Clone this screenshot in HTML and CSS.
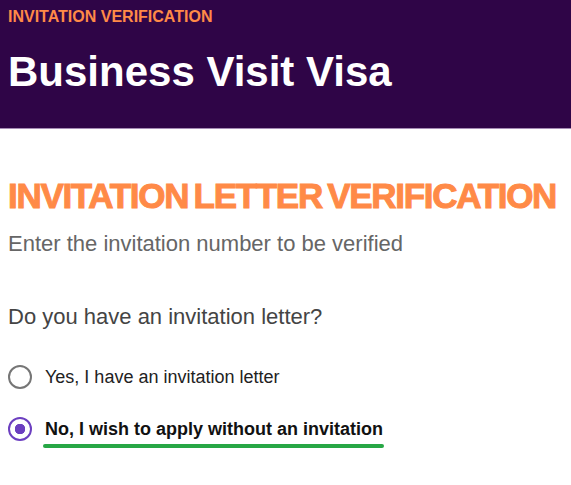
FILE: index.html
```html
<!DOCTYPE html>
<html lang="en">
<head>
    <meta charset="UTF-8">
    <meta name="viewport" content="width=device-width, initial-scale=1.0">
    <title>Business Visit Visa</title>
    <link rel="stylesheet" href="styles.css">
</head>
<body>
    <header class="banner">
        <p class="eyebrow">INVITATION VERIFICATION</p>
        <h1>Business Visit Visa</h1>
    </header>
    <main class="content">
        <h2>INVITATION LETTER VERIFICATION</h2>
        <p class="hint">Enter the invitation number to be verified</p>
        <p class="question">Do you have an invitation letter?</p>
        <div class="options">
            <label class="option">
                <input type="radio" name="invite" value="yes">
                <span class="option-text">Yes, I have an invitation letter</span>
            </label>
            <label class="option selected">
                <input type="radio" name="invite" value="no" checked>
                <span class="option-text">No, I wish to apply without an invitation</span>
            </label>
        </div>
    </main>
</body>
</html>
```

FILE: styles.css
```css
body {
    margin: 0;
    min-height: 100vh;
    font-family: "Liberation Sans", Arial, sans-serif;
    background: #fff;
}

.banner {
    background: #2f0547;
    padding: 8px 8px 0;
    height: 120px;
    border-bottom: 1px solid #a58cb5;
}

.eyebrow {
    margin: 0;
    color: #ff8a47;
    font-size: 16px;
    font-weight: bold;
}

.banner h1 {
    margin: 22px 0 0;
    color: #fff;
    font-size: 42px;
    font-weight: bold;
}

.content {
    padding: 0 8px 40px;
}

.content h2 {
    margin: 47px 0 0;
    color: #ff8a47;
    font-size: 35px;
    font-weight: 900;
    letter-spacing: -1.3px;
    word-spacing: -3px;
    -webkit-text-stroke: 1px #ff8a47;
}

.hint {
    margin: 15px 0 0;
    color: #666;
    font-size: 22px;
}

.question {
    margin: 47px 0 0;
    color: #444;
    font-size: 22px;
}

.options {
    margin-top: 35px;
    display: flex;
    flex-direction: column;
    gap: 28px;
}

.option {
    display: flex;
    align-items: center;
    gap: 13px;
    font-size: 18px;
    color: #222;
}

.option input {
    appearance: none;
    margin: 0;
    width: 24px;
    height: 24px;
    border: 2.5px solid #767676;
    border-radius: 50%;
    box-sizing: border-box;
    flex-shrink: 0;
}

.option input:checked {
    border-color: #6c3fc0;
    background: radial-gradient(circle, #6c3fc0 0 5px, #fff 5.5px);
}

.option-text {
    position: relative;
}

.option.selected .option-text {
    font-weight: bold;
    color: #111;
}

.option.selected .option-text::after {
    content: "";
    position: absolute;
    left: -2px;
    right: -1px;
    bottom: -8px;
    height: 4px;
    border-radius: 2px;
    background: #27a745;
}
```
